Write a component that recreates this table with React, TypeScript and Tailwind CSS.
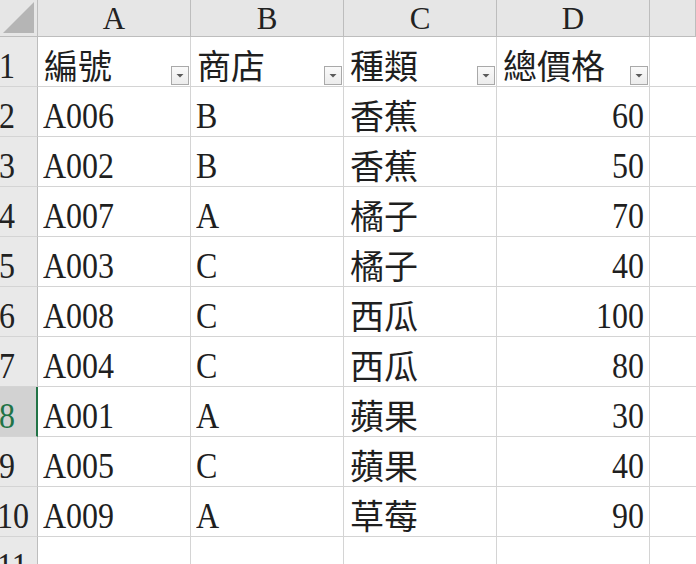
import React from "react";

const COLS = ["A", "B", "C", "D"];

const ROWS: { id: string; shop: string; kind: string; total: number }[] = [
  { id: "A006", shop: "B", kind: "香蕉", total: 60 },
  { id: "A002", shop: "B", kind: "香蕉", total: 50 },
  { id: "A007", shop: "A", kind: "橘子", total: 70 },
  { id: "A003", shop: "C", kind: "橘子", total: 40 },
  { id: "A008", shop: "C", kind: "西瓜", total: 100 },
  { id: "A004", shop: "C", kind: "西瓜", total: 80 },
  { id: "A001", shop: "A", kind: "蘋果", total: 30 },
  { id: "A005", shop: "C", kind: "蘋果", total: 40 },
  { id: "A009", shop: "A", kind: "草莓", total: 90 },
];

const HEADERS = ["編號", "商店", "種類", "總價格"];

const SELECTED_ROW = 8;

const latin = "font-['Liberation_Serif',serif] text-[32px] leading-none";
const cjk = "font-['Noto_Sans_CJK_TC','Noto_Sans_CJK_SC',sans-serif] text-[34px] leading-none";

function Latin({ children }: { children: React.ReactNode }) {
  return <span className="inline-block origin-bottom scale-y-[1.15]">{children}</span>;
}

function FilterButton() {
  return (
    <div className="absolute right-[1px] bottom-[1px] w-[18px] h-[19px] border border-[#a9a9a9] bg-gradient-to-b from-[#fafafa] to-[#ececec] flex items-center justify-center">
      <svg width="8" height="5" viewBox="0 0 8 5">
        <path d="M0.5 1h7L4 4.5z" fill="#5a5a5a" />
      </svg>
    </div>
  );
}

function RowHeader({ n }: { n: number }) {
  const selected = n === SELECTED_ROW;
  return (
    <div
      className={
        "h-[50px] border-b border-[#d4d4d4] flex items-end pb-[2px] overflow-hidden " +
        (selected
          ? "bg-[#d2d2d2] text-[#217346] border-r-2 border-r-[#217346]"
          : "bg-[#e9e9e9] text-[#222] border-r border-r-[#bdbdbd]")
      }
    >
      <span className={latin + (n >= 10 ? " -ml-[3px]" : " -ml-[1px]")}>
        <Latin>{n}</Latin>
      </span>
    </div>
  );
}

export default function App() {
  return (
    <div className="w-[696px] h-[564px] overflow-hidden bg-white text-[#1f1f1f]">
      <div className="grid grid-cols-[38px_153px_153px_153px_153px_1fr]">
        {/* column letters */}
        <div className="h-[37px] bg-[#e6e6e6] border-r border-b border-[#bdbdbd] relative">
          <svg className="absolute left-[3px] top-[2px]" width="31" height="31" viewBox="0 0 31 31">
            <path d="M0 31L31 0V31z" fill="#b5b5b5" />
          </svg>
        </div>
        {[...COLS, ""].map((c, i) => (
          <div
            key={i}
            className="h-[37px] bg-[#e6e6e6] border-r border-b border-[#bdbdbd] flex items-center justify-center text-[#222]"
          >
            <span className="font-['Liberation_Serif',serif] text-[31px] leading-none">{c}</span>
          </div>
        ))}

        {/* row 1: filter headers */}
        <RowHeader n={1} />
        {HEADERS.map((h) => (
          <div key={h} className="relative h-[50px] border-r border-b border-[#d4d4d4] flex items-end pl-[6px] pb-[4px]">
            <span className={cjk}>{h}</span>
            <FilterButton />
          </div>
        ))}
        <div className="h-[50px] border-b border-[#d4d4d4]" />

        {ROWS.map((r, i) => (
          <React.Fragment key={r.id}>
            <RowHeader n={i + 2} />
            <div className="h-[50px] border-r border-b border-[#d4d4d4] flex items-end pl-[5px] pb-[2px]">
              <span className={latin}>
                <Latin>{r.id}</Latin>
              </span>
            </div>
            <div className="h-[50px] border-r border-b border-[#d4d4d4] flex items-end pl-[5px] pb-[2px]">
              <span className={latin}>
                <Latin>{r.shop}</Latin>
              </span>
            </div>
            <div className="h-[50px] border-r border-b border-[#d4d4d4] flex items-end pl-[6px] pb-[4px]">
              <span className={cjk}>{r.kind}</span>
            </div>
            <div className="h-[50px] border-r border-b border-[#d4d4d4] flex items-end justify-end pr-[5px] pb-[2px]">
              <span className={latin}>
                <Latin>{r.total}</Latin>
              </span>
            </div>
            <div className="h-[50px] border-b border-[#d4d4d4]" />
          </React.Fragment>
        ))}

        {/* row 11, cut off by the window */}
        <RowHeader n={11} />
        <div className="h-[50px] border-r border-b border-[#d4d4d4]" />
        <div className="h-[50px] border-r border-b border-[#d4d4d4]" />
        <div className="h-[50px] border-r border-b border-[#d4d4d4]" />
        <div className="h-[50px] border-r border-b border-[#d4d4d4]" />
        <div className="h-[50px] border-b border-[#d4d4d4]" />
      </div>
    </div>
  );
}
